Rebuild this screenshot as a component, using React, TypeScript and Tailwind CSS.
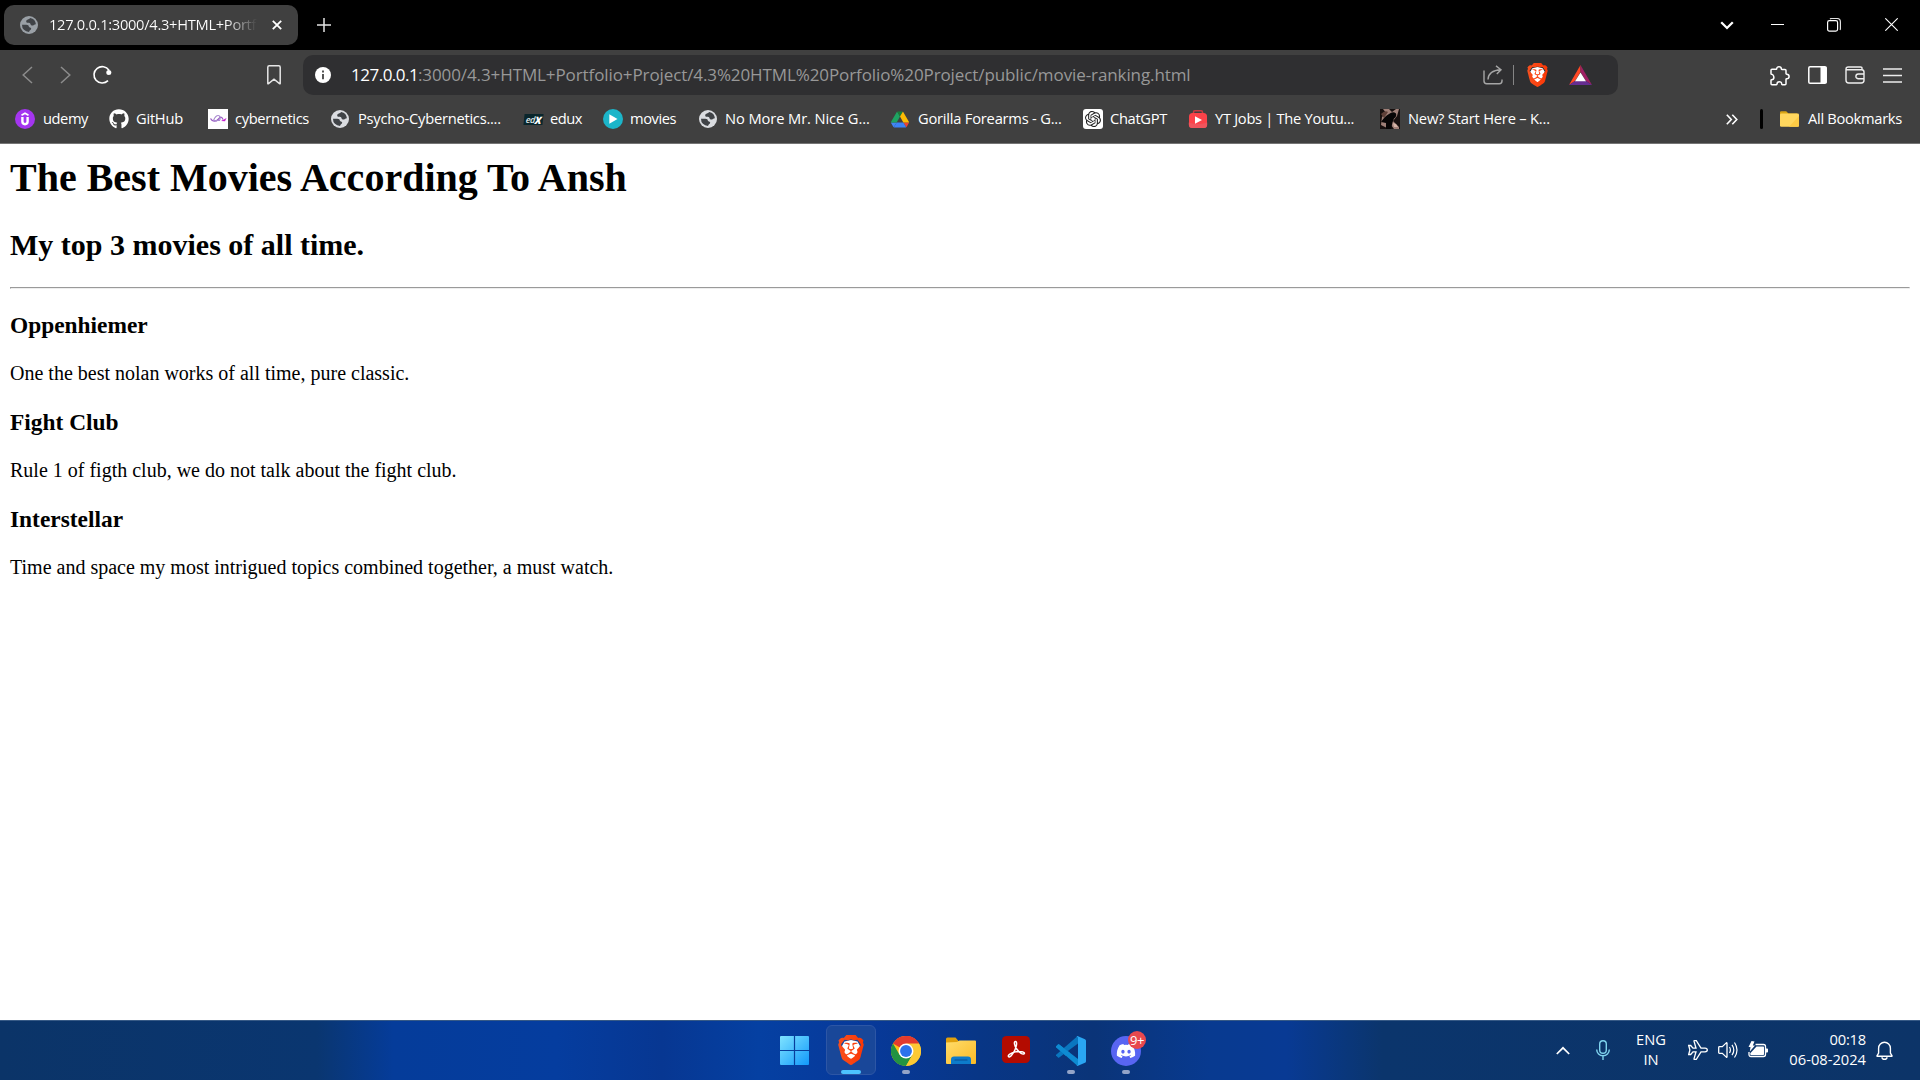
import React from "react";
import type { ReactNode } from "react";
import { SiBrave, SiOpenai } from "react-icons/si";
import { FaGithub, FaDiscord } from "react-icons/fa";

type SvgProps = { w: number; h: number; vb?: string; children: ReactNode; className?: string };

function Svg({ w, h, vb, children, className = "" }: SvgProps) {
  return (
    <svg width={w} height={h} viewBox={vb ?? `0 0 ${w} ${h}`} fill="none" className={`block shrink-0 ${className}`}>
      {children}
    </svg>
  );
}

function Globe({ color, land }: { color: string; land: string }) {
  return (
    <Svg w={18} h={18}>
      <circle cx="9" cy="9" r="9" fill={color} />
      <path
        d="M10.200 2C9 3.600 6.200 3.600 6.200 5.400c0 1.400 1.300 1.300 2.600 1.400 1.400.1 1.500.6 1.700 1.500.2 1 1.300 1.300 2.400 1.200 1.200-.1 1.600-1.300 3-1.200A7 7 0 0 0 10.200 2z"
        fill={land}
      />
      <path
        d="M2 8.700h4.200c1.900 0 2.600.8 2.700 2 .1 1.100 2.300.5 2.300 1.900 0 1.500-1.700 1.600-2.200 3.400A7 7 0 0 1 2 8.700z"
        fill={land}
      />
    </Svg>
  );
}

function BraveMark({ id, w, h }: { id: string; w: number; h: number }) {
  return (
    <svg width={w} height={h} viewBox="0 0 26 30" className="block shrink-0">
      <defs>
        <linearGradient id={id} x1="0" x2="1">
          <stop offset="0" stopColor="#f8501e" />
          <stop offset="1" stopColor="#fb3705" />
        </linearGradient>
      </defs>
      <path d="M13 5 6.500 6.500 4 11l3.500 11 5.500 5 5.500-5L22 11l-2.500-4.500z" fill="#fff" />
      <SiBrave x="-2" y="0" size={30} style={{ fill: `url(#${id})` }} />
    </svg>
  );
}

const bookmarks: { label: string; icon: ReactNode; box: string; text: string }[] = [
  {
    label: "udemy",
    box: "w-[94px]",
    text: "tracking-[-0.45px]",
    icon: (
      <Svg w={20} h={20}>
        <circle cx="10" cy="10" r="10" fill="#a435f0" />
        <path d="M6.500 6.200 10 4.200l3.500 2" stroke="#fff" strokeWidth="1.700" />
        <path d="M7.400 8v4.600a2.600 2.600 0 0 0 5.200 0V8" stroke="#fff" strokeWidth="2.400" />
      </Svg>
    ),
  },
  { label: "GitHub", box: "w-[99px]", text: "-ml-px tracking-[-0.25px]", icon: <FaGithub size={20} color="#fff" /> },
  {
    label: "cybernetics",
    box: "w-[122px]",
    text: "-ml-px tracking-[-0.35px]",
    icon: (
      <Svg w={20} h={20}>
        <rect width="20" height="20" fill="#fff" />
        <path d="M2.500 9.500C4 12.500 8 13 10 10.500s3.500-4 5 0" stroke="#9a5fc4" strokeWidth="1.300" />
        <path d="M5.500 11.500c1-2.500 3-5 4.800-5s2.200 3.500 1.200 5H6" stroke="#a98ad0" strokeWidth="1.200" />
        <path d="m13 12 5.500-3-1.500 3.200z" fill="#c81fd0" />
      </Svg>
    ),
  },
  { label: "Psycho-Cybernetics....", box: "w-[193px]", text: "tracking-[-0.25px]", icon: <Globe color="#dadce0" land="#404347" /> },
  {
    label: "edux",
    box: "w-[80px]",
    text: "-ml-px tracking-[-0.5px]",
    icon: (
      <span className="flex h-[11px] w-[19px] -skew-x-6 items-center justify-center bg-[#0a262c] font-['Open_Sans',sans-serif] text-[9px] leading-none font-semibold tracking-[-0.5px] text-[#dfe7e8] italic">
        ed<b className="text-[10px] text-white">X</b>
      </span>
    ),
  },
  {
    label: "movies",
    box: "w-[95px]",
    text: "-ml-px tracking-[-0.45px]",
    icon: (
      <Svg w={20} h={20}>
        <circle cx="10" cy="10" r="10" fill="#1cb5c9" />
        <path d="M6.300 5.300v9.400L14.500 10z" fill="#fff" />
      </Svg>
    ),
  },
  { label: "No More Mr. Nice G...", box: "w-[192px]", text: "-ml-px tracking-[-0.1px]", icon: <Globe color="#dadce0" land="#404347" /> },
  {
    label: "Gorilla Forearms - G...",
    box: "w-[193px]",
    text: "tracking-[-0.22px]",
    icon: (
      <Svg w={18} h={17} vb="0 0 87.300 78">
        <path d="m6.600 66.850 3.850 6.650c.8 1.400 1.950 2.500 3.300 3.300L27.500 53H0c0 1.550.4 3.100 1.200 4.500z" fill="#4285f4" />
        <path d="M43.650 25 29.900 1.200c-1.350.8-2.500 1.900-3.300 3.300L1.200 48.500A9.060 9.060 0 0 0 0 53h27.500z" fill="#1ea362" />
        <path d="M73.550 76.800c1.350-.8 2.500-1.900 3.300-3.300l9.250-16c.8-1.400 1.200-2.950 1.200-4.500H59.798z" fill="#ea4335" />
        <path d="M43.650 25 57.400 1.200C56.050.4 54.500 0 52.900 0H34.400c-1.600 0-3.150.45-4.500 1.200z" fill="#188038" />
        <path d="M59.800 53H27.500L13.750 76.800c1.350.8 2.900 1.200 4.500 1.200h50.800c1.600 0 3.150-.45 4.500-1.200z" fill="#3b82f6" />
        <path d="M73.400 26.500 60.700 4.500c-.8-1.400-1.950-2.500-3.300-3.300L43.650 25 59.800 53h27.450c0-1.550-.4-3.100-1.200-4.500z" fill="#fbbc04" />
      </Svg>
    ),
  },
  {
    label: "ChatGPT",
    box: "w-[105px]",
    text: "-ml-px tracking-[-0.33px]",
    icon: (
      <span className="flex size-5 items-center justify-center rounded-[3px] bg-white">
        <SiOpenai size={16} color="#222" />
      </span>
    ),
  },
  {
    label: "YT Jobs | The Youtu...",
    box: "w-[192px]",
    text: "-ml-px tracking-[-0.3px]",
    icon: (
      <Svg w={20} h={20}>
        <path d="M5.500 4.500V3.200q0-1.400 1.400-1.400h6.200q1.400 0 1.400 1.400v1.300" stroke="#c93a40" strokeWidth="1.600" />
        <rect x="1" y="4" width="18" height="15" rx="3.500" fill="#fc4249" />
        <path d="M.8 13.500q9.200 3 18.400 0V15.500a3.500 3.500 0 0 1-3.500 3.500H4.300a3.500 3.500 0 0 1-3.500-3.500z" fill="#f0545c" />
        <path d="M7 7.200v7.600l7-3.800z" fill="#fff" />
      </Svg>
    ),
  },
  {
    label: "New? Start Here – K...",
    box: "w-[180px]",
    text: "tracking-[-0.2px]",
    icon: (
      <Svg w={20} h={20}>
        <rect width="20" height="20" fill="#17100f" />
        <path d="M3 0h6l3 3 4-3h3l-2 7-4 5 6 6v2h-5l-3-4-4 3-6-3 1-8 4-4z" fill="#a08078" />
        <path d="M1 5q4-4 7-2L4 9z" fill="#5f4038" />
        <path d="M9 5q4-3 7-.5 1 3-2 5l-1.500 4-1.500 6.500H6V14l-5-1q4-6 8-8z" fill="#080606" />
        <path d="m13 14 3 1 2 3h-4z" fill="#d4b3a6" />
      </Svg>
    ),
  },
];

function TitleBar() {
  return (
    <div className="flex h-[50px] items-center bg-black pl-1">
      <div className="flex h-10 w-[294px] items-center rounded-[10px] bg-[#404040] pl-4">
        <Globe color="#9aa0a6" land="#404347" />
        <div className="mb-[2px] ml-[11px] w-[208px] overflow-hidden bg-gradient-to-r from-white from-85% to-transparent bg-clip-text text-[14.7px] leading-5 tracking-[-0.3px] whitespace-nowrap text-transparent">
          127.0.0.1:3000/4.3+HTML+Portf
        </div>
        <Svg w={10} h={10} className="ml-[15px]">
          <path d="m.8.8 8.400 8.400M9.200.8.8 9.200" stroke="#fff" strokeWidth="1.800" />
        </Svg>
      </div>
      <Svg w={14} h={14} className="ml-[19px]">
        <path d="M0 7h14M7 0v14" stroke="#e4e4e4" strokeWidth="1.500" />
      </Svg>
      <div className="ml-auto flex items-center pr-[22px]">
        <Svg w={14} h={9}>
          <path d="m1.200 1.300 5.800 5.700 5.800-5.700" stroke="#fff" strokeWidth="2.300" />
        </Svg>
        <Svg w={13} h={13} className="mb-px ml-[37px]">
          <path d="M0 6.500h13" stroke="#fff" />
        </Svg>
        <Svg w={14} h={14} className="mb-px ml-[43px]">
          <rect x=".6" y="2.600" width="10" height="10.500" rx="1.800" stroke="#fff" strokeWidth="1.200" />
          <path d="M3 1q.5-.5 1.500-.5H10Q13.400.5 13.400 4v6.500q0 .9-.4 1.500" stroke="#e0e0e0" strokeWidth="1.200" />
        </Svg>
        <Svg w={13} h={13} className="mb-px ml-[44px]">
          <path d="m.3.3 12.400 12.400M12.700.3.3 12.700" stroke="#fff" strokeWidth="1.100" />
        </Svg>
      </div>
    </div>
  );
}

function Toolbar() {
  return (
    <div className="flex h-[50px] items-center bg-[#404040] pl-[22px]">
      <Svg w={11} h={18}>
        <path d="M10 1 1.200 9 10 17" stroke="#8c8c8c" strokeWidth="1.500" />
      </Svg>
      <Svg w={11} h={18} className="ml-[27px]">
        <path d="m1 1 8.800 8L1 17" stroke="#8c8c8c" strokeWidth="1.500" />
      </Svg>
      <Svg w={20} h={20} className="ml-[21px]">
        <path d="M17 5.200A8.200 8.200 0 1 0 16 15.600" stroke="#fff" strokeWidth="1.600" />
        <circle cx="16.800" cy="7.500" r="2.500" fill="#fff" />
      </Svg>
      <Svg w={14} h={20} className="ml-[155px]">
        <path d="M.8 18.400V2.200Q.8.800 2.200.8h9.600q1.400 0 1.400 1.400v16.200q0 .7-.7.2L7 14.200l-5.500 4.400q-.7.500-.7-.2z" stroke="#e6e6e6" strokeWidth="1.500" />
      </Svg>
      <div className="ml-[22px] flex h-10 w-[1315px] items-center rounded-[10px] bg-[#2f2f31] pl-3">
        <Svg w={16} h={16}>
          <circle cx="8" cy="8" r="8" fill="#fff" />
          <path d="M8 3.600v2M8 7v5.300" stroke="#444" strokeWidth="1.800" />
        </Svg>
        <div className="ml-5 flex text-[17px] leading-6 whitespace-nowrap">
          <span className="w-[67px] tracking-[-0.5px] text-white">127.0.0.1</span>
          <span className="tracking-[-0.1px] text-[#989898]">
            :3000/4.3+HTML+Portfolio+Project/4.3%20HTML%20Porfolio%20Project/public/movie-ranking.html
          </span>
        </div>
        <div className="ml-auto flex items-center pr-[26px]">
          <Svg w={20} h={20}>
            <path d="M1 5.500V16q0 2.700 2.700 2.700h12.600q2.700 0 2.700-2.700v-1.500" stroke="#a6a6a6" strokeWidth="1.400" />
            <path d="M5 14.500q.5-9 12.800-9.700M13 .9l5 3.900-4.200 4.200" stroke="#a6a6a6" strokeWidth="1.400" />
          </Svg>
          <div className="ml-[10px] h-5 w-px bg-[#858585]" />
          <span className="ml-[13px]">
            <BraveMark id="brave-shield" w={21} h={24} />
          </span>
          <Svg w={23} h={20} className="ml-[21px]">
            <path d="M11.500 0 0 20l6-4 5.500-9z" fill="#ff4724" />
            <path d="M11.500 0 23 20l-6-4-5.500-9z" fill="#9e1f63" />
            <path d="m0 20 6-4h11l6 4z" fill="#662d91" />
            <path d="M11.500 7.500 6 16.300h11z" fill="#fff" />
          </Svg>
        </div>
      </div>
      <div className="ml-auto flex items-center pr-[18px]">
        <Svg w={20} h={20} className="mt-px">
          <path
            d="M1 4.200q0-.9.900-.9h4.300q.5 0 .5-.5C6.700 1.400 7.700.8 9 .8s2.300.7 2.300 2c0 .4.200.6.600.6H15q1 0 1 1v3.200c0 .4.200.6.700.6 1.500 0 2.400 1 2.400 2.300s-.9 2.300-2.400 2.300c-.5 0-.7.200-.7.600v4.300q0 1-1 1h-2.700c-.5 0-.6-.3-.6-.7 0-1.400-1-2.300-2.400-2.300s-2.300.9-2.300 2.300c0 .4-.2.700-.6.700H2q-1 0-1-1v-3.400c0-.4.300-.6.700-.6 1.500 0 2.200-1 2.200-2.100S3.200 8.300 1.700 8.300C1.300 8.300 1 8.100 1 7.700z"
            stroke="#fff"
            strokeWidth="1.500"
          />
        </Svg>
        <Svg w={19} h={18} className="ml-[18px]">
          <rect x=".8" y=".8" width="17.400" height="16.400" rx="1.300" stroke="#fff" strokeWidth="1.500" />
          <rect x="12.500" y="1" width="6" height="16" fill="#fff" />
        </Svg>
        <Svg w={20} h={18} className="ml-[18px]">
          <path d="M17 3.800V2.200Q17 1 15.700 1H3.300Q1 1 1 3v11.300Q1 17 3.700 17h12.600q2.700 0 2.700-2.700V6Q19 3.800 16.700 3.800H3Q1 3.800 1 2.800" stroke="#eee" strokeWidth="1.400" />
          <path d="M19 8h-5.700a2.400 2.400 0 0 0 0 4.800H19" stroke="#eee" strokeWidth="1.400" />
        </Svg>
        <Svg w={19} h={15} className="ml-[18px]">
          <path d="M0 1h19M0 7.500h19M0 14h19" stroke="#ececec" strokeWidth="1.300" />
        </Svg>
      </div>
    </div>
  );
}

function BookmarksBar() {
  return (
    <div className="flex h-11 items-center border-b border-[#757575] bg-[#404040] pr-[18px] pb-[5px] pl-[15px] text-[14.7px] leading-5 text-white">
      {bookmarks.map((b) => (
        <div key={b.label} className={`flex shrink-0 items-center whitespace-nowrap ${b.box}`}>
          <span className="mr-2 flex w-5 justify-center">{b.icon}</span>
          <span className={`mb-[2px] ${b.text}`}>{b.label}</span>
        </div>
      ))}
      <div className="ml-auto flex items-center">
        <Svg w={12} h={11}>
          <path d="m.8.8 4.500 4.700-4.500 4.700M6.300.8l4.500 4.700-4.500 4.700" stroke="#fff" strokeWidth="1.600" />
        </Svg>
        <div className="ml-[22px] h-5 w-[3px] rounded-full bg-black" />
        <Svg w={19} h={16} className="ml-[17px]">
          <path d="M0 1.500Q0 .3 1.200.3h5L8.500 2.500H17v4H0z" fill="#d9a514" />
          <rect y="2.500" width="19" height="13.300" rx="1.300" fill="#ffd75e" />
          <path d="M9 15.800 19 5v9.500q0 1.300-1.300 1.300z" fill="#fdcb45" />
        </Svg>
        <span className="mb-[2px] ml-[9px] w-[94px] tracking-[-0.3px] whitespace-nowrap">All Bookmarks</span>
      </div>
    </div>
  );
}

const movies = [
  { title: "Oppenhiemer", text: "One the best nolan works of all time, pure classic." },
  { title: "Fight Club", text: "Rule 1 of figth club, we do not talk about the fight club." },
  { title: "Interstellar", text: "Time and space my most intrigued topics combined together, a must watch." },
];

function Page() {
  return (
    <main className="flex-1 overflow-hidden bg-white px-[10px] pt-[11px] font-['Liberation_Serif',serif] text-black">
      <h1 className="text-[40px] leading-[46px] font-bold">The Best Movies According To Ansh</h1>
      <h2 className="mt-[27px] text-[30px] leading-[34px] font-bold">My top 3 movies of all time.</h2>
      <hr className="mt-[25px] mb-[23px] h-[2px] border border-t-[#9a9a9a] border-r-[#eee] border-b-[#eee] border-l-[#9a9a9a]" />
      {movies.map((m) => (
        <section key={m.title} className="mb-6">
          <h3 className="text-[23.4px] leading-[27px] font-bold">{m.title}</h3>
          <p className="mt-[23px] text-[20px] leading-[23px]">{m.text}</p>
        </section>
      ))}
    </main>
  );
}

function TaskItem({ children, box, dot }: { children: ReactNode; box: string; dot?: boolean }) {
  return (
    <div className={`flex h-[50px] flex-col items-center pt-[11px] ${box}`}>
      <div className="flex h-[30px] items-start">{children}</div>
      {dot && <div className="mt-1 h-1 w-2 rounded-full bg-[#93a4c8]" />}
    </div>
  );
}

function Taskbar() {
  return (
    <footer className="flex h-[60px] items-start border-t border-[#375a86] bg-[linear-gradient(90deg,#0b3468_0%,#0a3670_16.500%,#053c9a_20.500%,#053d9f_29%,#073792_34.500%,#0540a2_39.500%,#07399a_45%,#083686_51%,#0a3478_57%,#083a90_63%,#083a94_67%,#0b356c_72%,#0c3468_100%)] pt-1 text-[14.7px] text-white">
      <div className="flex w-[1556px] pl-[767px]">
        <TaskItem box="w-[55px]">
          <Svg w={29} h={29}>
            <defs>
              <linearGradient id="win" x1="0" y1="0" x2="1" y2="1">
                <stop offset="0" stopColor="#7fe3ff" />
                <stop offset="1" stopColor="#1199fb" />
              </linearGradient>
            </defs>
            <rect width="29" height="29" rx="1" fill="url(#win)" />
            <path d="M14.500 0v29M0 14.500h29" stroke="#083e9b" strokeWidth="1.200" />
          </Svg>
        </TaskItem>
        <div className="ml-1 flex h-[50px] w-[50px] flex-col items-center rounded-md border border-[#2d56a5] bg-[#194799] pt-[9px]">
          <BraveMark id="brave-app" w={26} h={30} />
          <div className="mt-[5px] h-1 w-5 shrink-0 rounded-full bg-[#4cc2ff]" />
        </div>
        <TaskItem box="w-[60px]" dot>
          <Svg w={30} h={30} vb="0 0 48 48">
            <circle cx="24" cy="24" r="24" fill="#fbc116" />
            <path d="M24 24 3.200 12A24 24 0 0 1 44.800 12z" fill="#e33b2e" />
            <path d="M24 12h20.800A24 24 0 0 0 24 0z" fill="#e33b2e" />
            <path d="M3.200 12A24 24 0 0 0 24 48l10.400-18L24 24 13.600 30z" fill="#229342" />
            <path d="M44.800 12A24 24 0 0 1 24 48l10.400-18A12 12 0 0 0 34.400 18L24 12z" fill="#fcc934" />
            <circle cx="24" cy="24" r="12" fill="#fff" />
            <circle cx="24" cy="24" r="9.500" fill="#2d72ea" />
          </Svg>
        </TaskItem>
        <TaskItem box="w-[50px]">
          <Svg w={30} h={27} className="mt-px">
            <defs>
              <linearGradient id="folder" x1="0" y1="0" x2="1" y2="1">
                <stop offset="0" stopColor="#ffdc6b" />
                <stop offset="1" stopColor="#fbbb26" />
              </linearGradient>
            </defs>
            <path d="M0 2Q0 .500 1.500.5h8L12.500 4H20v5H0z" fill="#e0a00c" />
            <path d="M0 5.500 11 5l2.500-1.500H29q1 0 1 1V26q0 1-1 1H1q-1 0-1-1z" fill="url(#folder)" />
            <path d="M5 27v-4.500Q5 19.500 8 19.500h14q3 0 3 3V27z" fill="#0d7bcb" />
            <path d="M9 23h12" stroke="#0b4f94" strokeWidth="1.200" strokeLinecap="round" />
          </Svg>
        </TaskItem>
        <TaskItem box="w-[60px]">
          <Svg w={28} h={27}>
            <rect width="28" height="27" rx="4.500" fill="#b30b00" />
            <path
              d="M13.500 5.500c-2 0-1 4.500 1.200 7.500 2.300 3.200 6 6 7.500 4.600 1.500-1.500-4.500-2.800-8.500-1.800-4 .9-8.200 3.200-7.200 4.800s4.600-2.600 6.300-6.300c1.800-3.700 2.600-8.800.7-8.800z"
              stroke="#fff"
              strokeWidth="1.500"
            />
          </Svg>
        </TaskItem>
        <TaskItem box="w-[50px]" dot>
          <Svg w={30} h={30}>
            <path d="M0 10.500 2 8.400q.6-.4 1.200 0L22 23v6.500q-.6.200-1.200-.3L.4 11.600Q-.2 11 0 10.500z" fill="#0e8bd2" />
            <path d="M0 19.500l2 2.100q.6.400 1.200 0L22 7.500V.500q-.6-.2-1.200.3L.4 18.400q-.6.600-.4 1.100z" fill="#0a76bf" />
            <path d="M0 10.500 2 8.400q.6-.4 1.200 0L14 17l-4 3L.4 11.600Q-.2 11 0 10.500z" fill="#0e8bd2" />
            <path d="M22 .2 29 3.300q1 .5 1 1.500v20.400q0 1-1 1.500l-7 3.100q-1 .3-1.500-.5 1 .3 1.500-.8V1.500Q21.500.500 20.500.700 21-.1 22 .2z" fill="#2aa6f2" />
          </Svg>
        </TaskItem>
        <TaskItem box="w-[60px]" dot>
          <div className="relative flex size-[30px] items-center justify-center rounded-full bg-[#5865f2]">
            <FaDiscord size={20} color="#fff" />
            <span className="absolute -top-[5px] left-[17px] flex size-[18px] items-center justify-center rounded-full bg-[#e8484e] text-[13px] leading-none font-medium tracking-[-0.5px]">
              9+
            </span>
          </div>
        </TaskItem>
      </div>
      <div className="flex h-[50px] flex-1 items-center">
        <Svg w={14} h={9}>
          <path d="m.8 8 6.200-6.200L13.200 8" stroke="#fff" strokeWidth="1.700" />
        </Svg>
        <Svg w={14} h={20} className="ml-[26px]">
          <rect x="3.700" y=".7" width="6.600" height="12.600" rx="3.300" stroke="#7fd3ee" strokeWidth="1.400" />
          <path d="M.7 9.500a6.300 6.300 0 0 0 12.600 0M7 16v4" stroke="#7fd3ee" strokeWidth="1.400" />
        </Svg>
        <div className="mb-[2px] ml-[26px] w-[30px] text-center leading-5">
          <div>ENG</div>
          <div>IN</div>
        </div>
        <Svg w={20} h={20} className="ml-[22px]">
          <path
            d="M.7 5.500h2l2.300 2.700h3L6 1.200q-.1-.5.500-.5h1.800L13 8.200h4q2.300.2 2.300 1.800T17 11.800h-4l-4.700 7.500H6.500q-.6 0-.5-.5l2-7H5l-2.300 2.700h-2L1.900 10z"
            stroke="#fff"
            strokeWidth="1.300"
          />
        </Svg>
        <Svg w={20} h={18} className="ml-[10px]">
          <path d="M.7 6.500q0-.8.800-.8h2.800l4-3.800q.7-.5.700.4v13.400q0 .9-.7.400l-4-3.800H1.500q-.8 0-.8-.8z" stroke="#fff" strokeWidth="1.300" />
          <path d="M11.500 6q1.800 3 0 6M14 3.800q3.600 5.200 0 10.400M16.500 1.500q5 7.500 0 15" stroke="#fff" strokeWidth="1.200" />
        </Svg>
        <Svg w={20} h={17} className="mb-[2px] ml-[10px]">
          <path d="M7.500 3.500h8q2 0 2 2v8q0 2-2 2H3q-2 0-2-2V11" stroke="#fff" strokeWidth="1.300" />
          <path d="M8.500 5.500h6.800q.7 0 .7.700v7q0 .7-.7.700H3q-.7 0-.7-.7v-1z" fill="#fff" />
          <path d="M3.500 0 .5 6h2L1.800 10.500 7 4.500H4.800L6.500.5zM18 7.500h1.200q.8 0 .8.800v2.500q0 .8-.8.800H18z" fill="#fff" />
        </Svg>
        <div className="mb-[2px] ml-[20px] w-[78px] text-right leading-5 whitespace-nowrap">
          <div className="tracking-[-0.2px]">00:18</div>
          <div>06-08-2024</div>
        </div>
        <Svg w={17} h={19} className="ml-[10px]">
          <path d="M1 14.800 2.600 12V7.200a5.900 5.900 0 0 1 11.800 0V12l1.600 2.800q.1.500-.5.500h-14q-.6 0-.5-.5z" stroke="#fff" strokeWidth="1.400" />
          <path d="M6 16.200a2.500 2.100 0 0 0 5 0" stroke="#fff" strokeWidth="1.400" />
        </Svg>
      </div>
    </footer>
  );
}

export default function App() {
  return (
    <div className="flex h-[1080px] w-[1920px] flex-col overflow-hidden font-['Open_Sans',sans-serif]">
      <TitleBar />
      <Toolbar />
      <BookmarksBar />
      <Page />
      <Taskbar />
    </div>
  );
}
